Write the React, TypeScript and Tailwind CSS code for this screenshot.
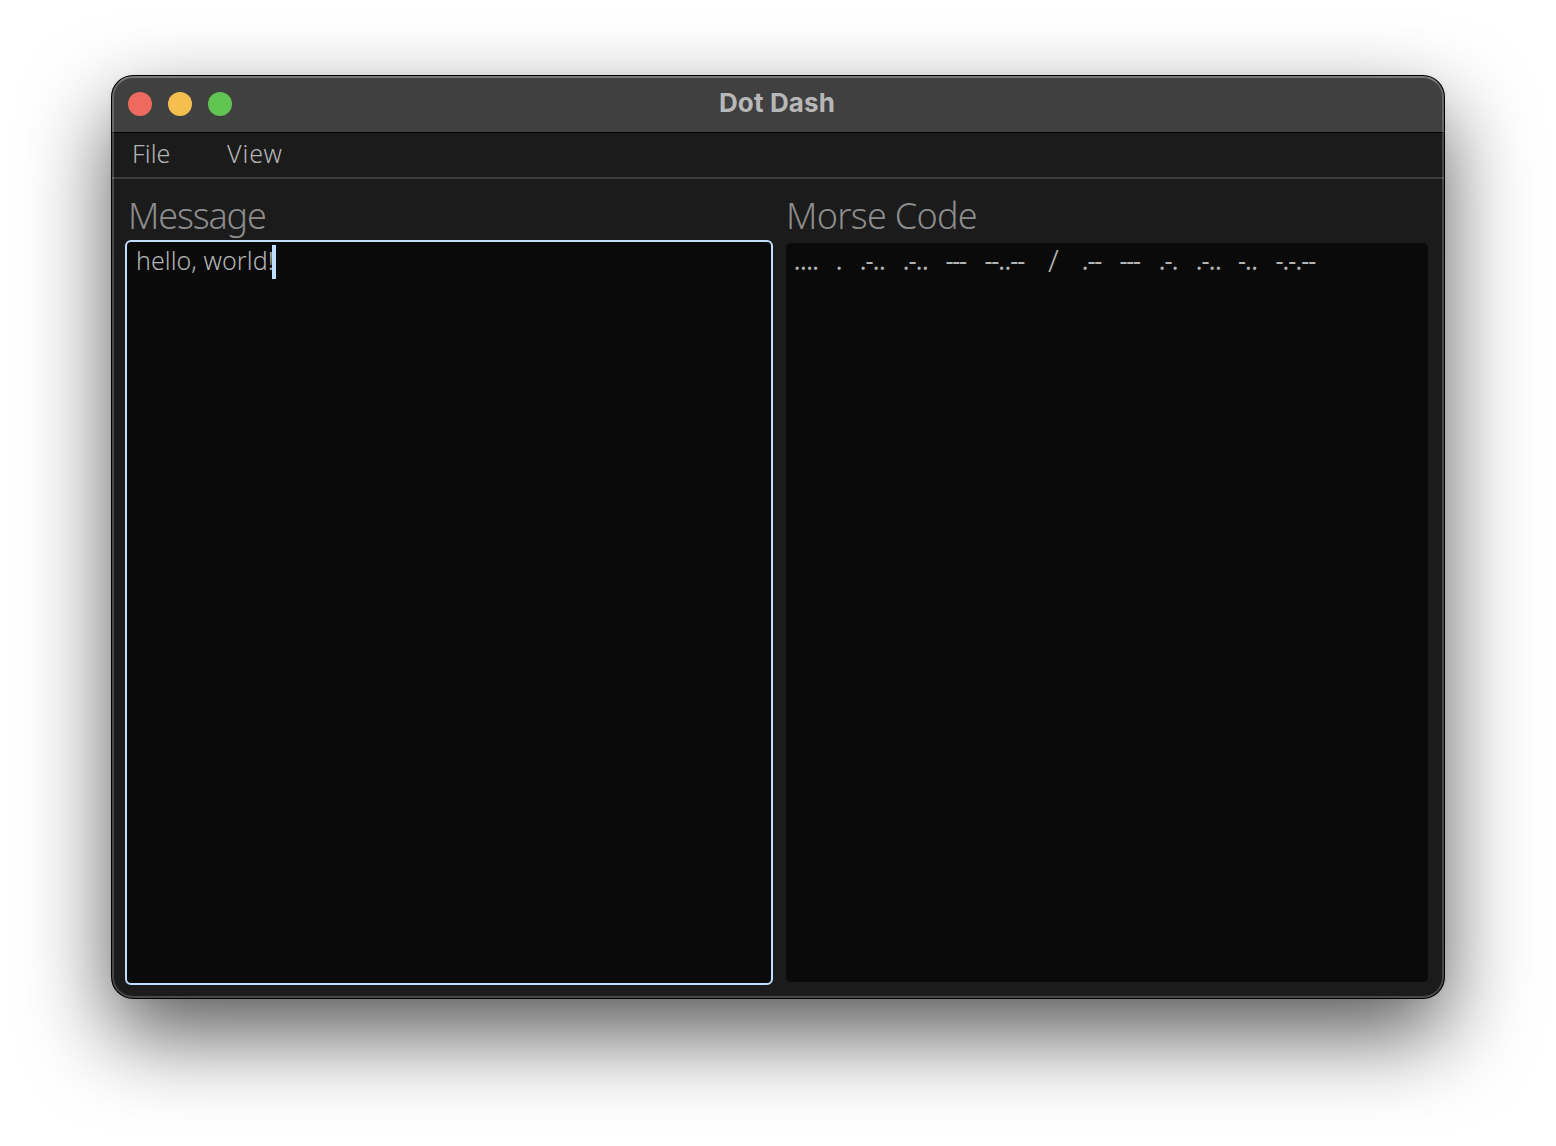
import type { ReactNode } from "react";

const TOKENS: { code: string; width: string }[] = [
  { code: "....", width: "w-[42px]" },
  { code: ".", width: "w-[24px]" },
  { code: ".-..", width: "w-[43px]" },
  { code: ".-..", width: "w-[43px]" },
  { code: "---", width: "w-[39px]" },
  { code: "--..--", width: "w-[63px]" },
  { code: "/", width: "w-[34px]" },
  { code: ".--", width: "w-[38px]" },
  { code: "---", width: "w-[39px]" },
  { code: ".-.", width: "w-[37px]" },
  { code: ".-..", width: "w-[42.5px]" },
  { code: "-..", width: "w-[37.5px]" },
  { code: "-.-.--", width: "w-[42px]" },
];

function Glyph({ char }: { char: string }) {
  if (char === "/") {
    return <span className="flex h-[34px] w-[11px] shrink-0 justify-center text-[31px] font-light">/</span>;
  }
  const style = char === "." ? "w-[6.2px]" : "w-[6.8px]";
  return <span className={`flex shrink-0 justify-center ${style}`}>{char}</span>;
}

function Heading({ children }: { children: ReactNode }) {
  return <h2 className="h-[52px] text-[36px] leading-[54px] font-light whitespace-nowrap text-[#8c8c8c]">{children}</h2>;
}

export default function App() {
  return (
    <div className="h-[1146px] w-[1556px] overflow-hidden bg-white px-[112px] pt-[76px] font-['Noto_Sans',sans-serif]">
      <div className="h-[922px] w-[1332px] rounded-[21px] bg-[#1b1b1b] shadow-[0_0_0_1px_#000,0_36px_86px_rgba(0,0,0,0.66),0_0_6px_rgba(0,0,0,0.06)]">
        <div className="relative flex h-full flex-col overflow-hidden rounded-[21px]">
          <header className="relative flex h-[57px] shrink-0 items-center border-b border-black bg-[#404040] pl-4">
            <div className="flex gap-4">
              <span className="size-6 rounded-full bg-[#ed6a5e]" />
              <span className="size-6 rounded-full bg-[#f5bf4f]" />
              <span className="size-6 rounded-full bg-[#61c554]" />
            </div>
            <h1 className="flex-1 pr-[122px] pb-[3px] text-center font-['Inter',sans-serif] text-[26px] font-bold tracking-[0.15px] text-[#b7b7b7]">
              Dot Dash
            </h1>
          </header>
          <nav className="flex h-[46px] shrink-0 border-b-2 border-[#3c3c3c] pl-5 text-[25px] leading-[40px] font-light text-[#b4b4b4]">
            <span className="w-[95px] tracking-[0.1px]">File</span>
            <span className="tracking-[0.9px]">View</span>
          </nav>
          <main className="flex flex-1 gap-[13px] px-[13px] pt-[10px]">
            <section className="w-[648px] shrink-0">
              <div className="pl-[3px] tracking-[-1.15px]">
                <Heading>Message</Heading>
              </div>
              <div className="mt-[-1px] flex h-[745px] rounded-[6px] border-2 border-[#c0deff] bg-[#0a0a0a] pt-[3px] pl-[9px] text-[25px] leading-[30px] font-light text-[#b4b4b4]">
                <span className="w-[136px] tracking-[0.05px] whitespace-nowrap">hello, world!</span>
                <span className="z-10 h-[34px] w-1 shrink-0 bg-[#c0deff]" />
              </div>
            </section>
            <section className="w-[642px] shrink-0">
              <div className="tracking-[-0.7px]">
                <Heading>Morse Code</Heading>
              </div>
              <div className="mt-[2px] flex h-[739px] rounded-[5px] bg-[#0a0a0a] pl-[8px] text-[25px] leading-[34px] text-[#b4b4b4]">
                {TOKENS.map((token, i) => (
                  <span key={i} className={`flex shrink-0 ${token.width}`}>
                    {token.code.split("").map((char, j) => (
                      <Glyph key={j} char={char} />
                    ))}
                  </span>
                ))}
              </div>
            </section>
          </main>
          <div className="pointer-events-none absolute inset-0 rounded-[21px] border-2 border-white/20 border-t-white/30" />
        </div>
      </div>
    </div>
  );
}
